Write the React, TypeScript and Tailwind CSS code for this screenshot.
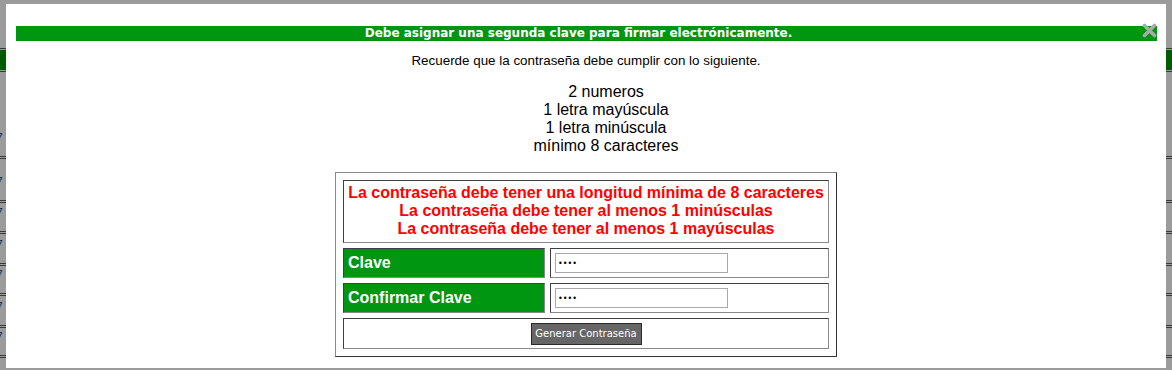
import React from 'react';

const STRIP_ROWS = [
  'h-[86px]',
  'h-[44px]',
  'h-[31px]',
  'h-[32px]',
  'h-[30px]',
  'h-[32px]',
  'h-[30px]',
];

function SideStrip({ side }: { side: 'left' | 'right' }) {
  return (
    <div className="w-[6px] shrink-0 flex flex-col overflow-hidden">
      <div className="h-[48px] shrink-0" />
      <div className="h-px shrink-0 bg-[#3a3a3a]" />
      <div className="h-px shrink-0" />
      <div className="h-[20px] shrink-0 bg-[#005c00]" />
      <div className="h-px shrink-0" />
      <div className="h-px shrink-0 bg-[#3a3a3a]" />
      <div className="h-px shrink-0" />
      {STRIP_ROWS.map((h, i) => (
        <div key={i} className={`${h} shrink-0 flex flex-col`}>
          <div className="flex-1 flex items-end pb-[12px]">
            {side === 'left' && (
              <span className="ml-[-4px] text-[12px] leading-[12px] text-[#20305a] font-['Liberation_Sans',sans-serif]">
                7
              </span>
            )}
          </div>
          <div className="h-px bg-[#3a3a3a]" />
          <div className="h-px" />
          <div className="h-px bg-[#3a3a3a]" />
        </div>
      ))}
    </div>
  );
}

function CloseIcon() {
  return (
    <svg width="15" height="15" viewBox="0 0 15 15" className="absolute left-[1136px] top-[19px]">
      <path d="M2.5 2.5 L12.5 12.5 M12.5 2.5 L2.5 12.5" stroke="#a9a9a9" strokeWidth="3.6" strokeLinecap="round" />
    </svg>
  );
}

const inset = 'border border-t-[#404040] border-l-[#404040] border-b-[#8a8a8a] border-r-[#8a8a8a]';

function FieldRow({ label }: { label: string }) {
  return (
    <div className="flex gap-[5px] h-[30px]">
      <div className={`w-[202px] ${inset} bg-[#009612] flex items-center pl-[4px]`}>
        <span className="text-white font-bold text-[16px] leading-[18px]">{label}</span>
      </div>
      <div className={`w-[279px] ${inset} bg-white pl-[4px] pt-[4px]`}>
        <input
          type="password"
          defaultValue="1234"
          className="block w-[173px] h-[20px] border border-[#a9a9a9] px-[2px] text-[8px] text-black outline-none font-['DejaVu_Sans',sans-serif]"
        />
      </div>
    </div>
  );
}

export default function App() {
  return (
    <div className="w-[1172px] h-[370px] bg-[#9b9b9b] flex overflow-hidden font-['Liberation_Sans',Arial,sans-serif]">
      <SideStrip side="left" />
      <div className="w-[1160px] shrink-0 flex flex-col">
        <div className="h-[4px] shrink-0" />
        <div className="relative h-[364px] shrink-0 bg-white flex flex-col items-center pt-[22px]">
          <div className="self-stretch ml-[10px] mr-[9px] h-[15px] pr-[16px] bg-[#009612] text-center text-white font-bold text-[12px] leading-[15px] font-['DejaVu_Sans',Verdana,sans-serif]">
            Debe asignar una segunda clave para firmar electrónicamente.
          </div>
          <CloseIcon />

          <p className="mt-[12px] text-[13.4px] leading-[15px] text-black">
            Recuerde que la contraseña debe cumplir con lo siguiente.
          </p>

          <div className="mt-[15px] ml-[40px] text-center text-[16px] leading-[18px] text-black">
            <div>2 numeros</div>
            <div>1 letra mayúscula</div>
            <div>1 letra minúscula</div>
            <div>mínimo 8 caracteres</div>
          </div>

          <div className="mt-[17px] w-[502px] border border-t-[#8a8a8a] border-l-[#8a8a8a] border-b-[#333] border-r-[#333] p-[7px] flex flex-col gap-[5px]">
            <div className={`h-[63px] ${inset} pt-[3px] text-center text-[#ff0000] font-bold text-[16px] leading-[18px]`}>
              <div>La contraseña debe tener una longitud mínima de 8 caracteres</div>
              <div>La contraseña debe tener al menos 1 minúsculas</div>
              <div>La contraseña debe tener al menos 1 mayúsculas</div>
            </div>
            <FieldRow label="Clave" />
            <FieldRow label="Confirmar Clave" />
            <div className={`h-[31px] ${inset} flex items-center justify-center pt-px`}>
              <button
                type="button"
                className="w-[111px] h-[22px] px-0 bg-[#666] border border-[#2a2a2a] text-white text-[10px] leading-[20px] whitespace-nowrap font-['DejaVu_Sans',Verdana,sans-serif]"
              >
                Generar Contraseña
              </button>
            </div>
          </div>
        </div>
      </div>
      <SideStrip side="right" />
    </div>
  );
}
